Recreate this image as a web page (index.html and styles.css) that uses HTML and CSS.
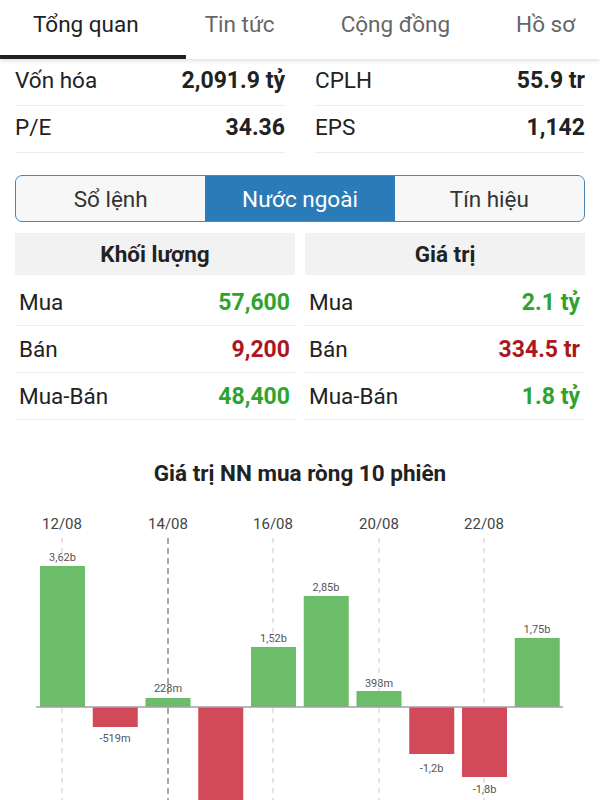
FILE: index.html
```html
<!DOCTYPE html>
<html>
<head>
  <meta charset="utf-8" />
  <title>Tổng quan</title>
  <link rel="stylesheet" href="styles.css">
</head>
<body>
  <nav class="tabs">
    <div class="tab active">Tổng quan</div>
    <div class="tab">Tin tức</div>
    <div class="tab">Cộng đồng</div>
    <div class="tab">Hồ sơ</div>
  </nav>

  <section class="info">
    <div class="info-row"><span>Vốn hóa</span><b>2,091.9 tỷ</b></div>
    <div class="info-row"><span>CPLH</span><b>55.9 tr</b></div>
    <div class="info-row"><span>P/E</span><b>34.36</b></div>
    <div class="info-row"><span>EPS</span><b>1,142</b></div>
  </section>

  <div class="segments">
    <div class="seg">Sổ lệnh</div>
    <div class="seg active">Nước ngoài</div>
    <div class="seg">Tín hiệu</div>
  </div>

  <section class="foreign">
    <div class="col">
      <div class="col-head">Khối lượng</div>
      <div class="f-row"><span>Mua</span><b class="up">57,600</b></div>
      <div class="f-row"><span>Bán</span><b class="down">9,200</b></div>
      <div class="f-row"><span>Mua-Bán</span><b class="up">48,400</b></div>
    </div>
    <div class="col">
      <div class="col-head">Giá trị</div>
      <div class="f-row"><span>Mua</span><b class="up">2.1 tỷ</b></div>
      <div class="f-row"><span>Bán</span><b class="down">334.5 tr</b></div>
      <div class="f-row"><span>Mua-Bán</span><b class="up">1.8 tỷ</b></div>
    </div>
  </section>

  <h2 class="chart-title">Giá trị NN mua ròng 10 phiên</h2>

  <svg class="chart" width="600" height="300" viewBox="0 0 600 300">
    <g class="dates">
      <text x="62" y="29">12/08</text>
      <text x="168" y="29">14/08</text>
      <text x="273" y="29">16/08</text>
      <text x="379" y="29">20/08</text>
      <text x="484" y="29">22/08</text>
    </g>
    <g class="vals">
      <text x="62.5" y="61">3,62b</text>
      <text x="115" y="242">-519m</text>
      <text x="168" y="192">228m</text>
      <text x="273.5" y="142">1,52b</text>
      <text x="326" y="91">2,85b</text>
      <text x="379" y="187">398m</text>
      <text x="431.5" y="272">-1,2b</text>
      <text x="484.5" y="293">-1,8b</text>
      <text x="537" y="133">1,75b</text>
    </g>
    <g class="grid">
      <line x1="62" y1="38" x2="62" y2="300" />
      <line class="focus" x1="168" y1="38" x2="168" y2="300" />
      <line x1="273" y1="38" x2="273" y2="300" />
      <line x1="379" y1="38" x2="379" y2="300" />
      <line x1="484" y1="38" x2="484" y2="300" />
    </g>
    <g class="bars">
      <rect class="pos" x="40" y="66" width="45" height="141" />
      <rect class="neg" x="92.75" y="207" width="45" height="20" />
      <rect class="pos" x="145.5" y="198" width="45" height="9" />
      <rect class="neg" x="198.25" y="207" width="45" height="100" />
      <rect class="pos" x="251" y="147" width="45" height="60" />
      <rect class="pos" x="303.75" y="96" width="45" height="111" />
      <rect class="pos" x="356.5" y="191" width="45" height="16" />
      <rect class="neg" x="409.25" y="207" width="45" height="47" />
      <rect class="neg" x="462" y="207" width="45" height="70" />
      <rect class="pos" x="514.75" y="138" width="45" height="69" />
    </g>
    <line class="axis" x1="36" y1="207" x2="563" y2="207" />
  </svg>
</body>
</html>
```

FILE: styles.css
```css
html, body {
  margin: 0;
  padding: 0;
  background: #fff;
  overflow: hidden;
}
body {
  width: 600px;
  font-family: Roboto, "Noto Sans", sans-serif;
  color: #222;
}

/* top tab bar */
.tabs {
  display: flex;
  height: 59px;
  box-shadow: 0 2px 4px rgba(0, 0, 0, 0.12);
  position: relative;
  white-space: nowrap;
}
.tab {
  position: relative;
  flex-shrink: 0;
  padding: 0 33px 11px;
  display: flex;
  align-items: center;
  font-size: 22.5px;
  color: #666;
}
.tab.active {
  color: #222;
}
.tab.active::after {
  content: "";
  position: absolute;
  left: 0;
  right: -14px;
  bottom: 0;
  height: 4px;
  background: #222;
}

/* key numbers */
.info {
  display: grid;
  grid-template-columns: 1fr 1fr;
  column-gap: 30px;
  padding: 0 15px;
}
.info-row {
  display: flex;
  justify-content: space-between;
  align-items: center;
  height: 42px;
  padding-bottom: 4px;
  border-bottom: 1px solid #ececec;
  font-size: 22.5px;
  white-space: nowrap;
}
.info-row b {
  font-weight: 700;
  font-size: 23px;
}

/* segmented control */
.segments {
  display: flex;
  margin: 22px 15px 0;
  height: 45px;
  border: 1.5px solid #4d86b0;
  border-radius: 7px;
  overflow: hidden;
  background: #f7f7f7;
}
.seg {
  flex: 1;
  display: flex;
  align-items: center;
  justify-content: center;
  font-size: 22.5px;
  color: #333;
}
.seg.active {
  background: #2b7bb8;
  color: #fff;
}

/* foreign trading table */
.foreign {
  display: grid;
  grid-template-columns: 1fr 1fr;
  column-gap: 10px;
  padding: 0 15px;
  margin-top: 11px;
}
.col-head {
  height: 42px;
  background: #f2f2f2;
  display: flex;
  align-items: center;
  justify-content: center;
  font-size: 22.5px;
  font-weight: 700;
  margin-bottom: 4px;
}
.f-row {
  display: flex;
  justify-content: space-between;
  align-items: center;
  height: 46px;
  padding: 0 5px 0 4px;
  border-bottom: 1px solid #ececec;
  font-size: 22.5px;
  white-space: nowrap;
}
.f-row b {
  font-size: 23px;
}
.up {
  color: #2ea42e;
}
.down {
  color: #ac1620;
}

/* chart */
.chart-title {
  margin: 40px 0 0;
  height: 40px;
  text-align: center;
  font-size: 22.5px;
  font-weight: 700;
  color: #222;
}
.chart {
  display: block;
  margin-top: 0;
}
.dates text {
  font-family: Roboto, sans-serif;
  font-size: 15px;
  fill: #444;
  text-anchor: middle;
}
.vals text {
  font-family: Roboto, sans-serif;
  font-size: 11px;
  fill: #555;
  text-anchor: middle;
}
.grid line {
  stroke: #c8c8c8;
  stroke-width: 1;
  stroke-dasharray: 5 5;
}
.grid line.focus {
  stroke: #777;
  stroke-width: 1.3;
  stroke-dasharray: 6 4;
}
.bars .pos {
  fill: #6bbd6a;
}
.bars .neg {
  fill: #d24a5a;
}
.axis {
  stroke: #a0a0a0;
  stroke-width: 1.5;
}
```
